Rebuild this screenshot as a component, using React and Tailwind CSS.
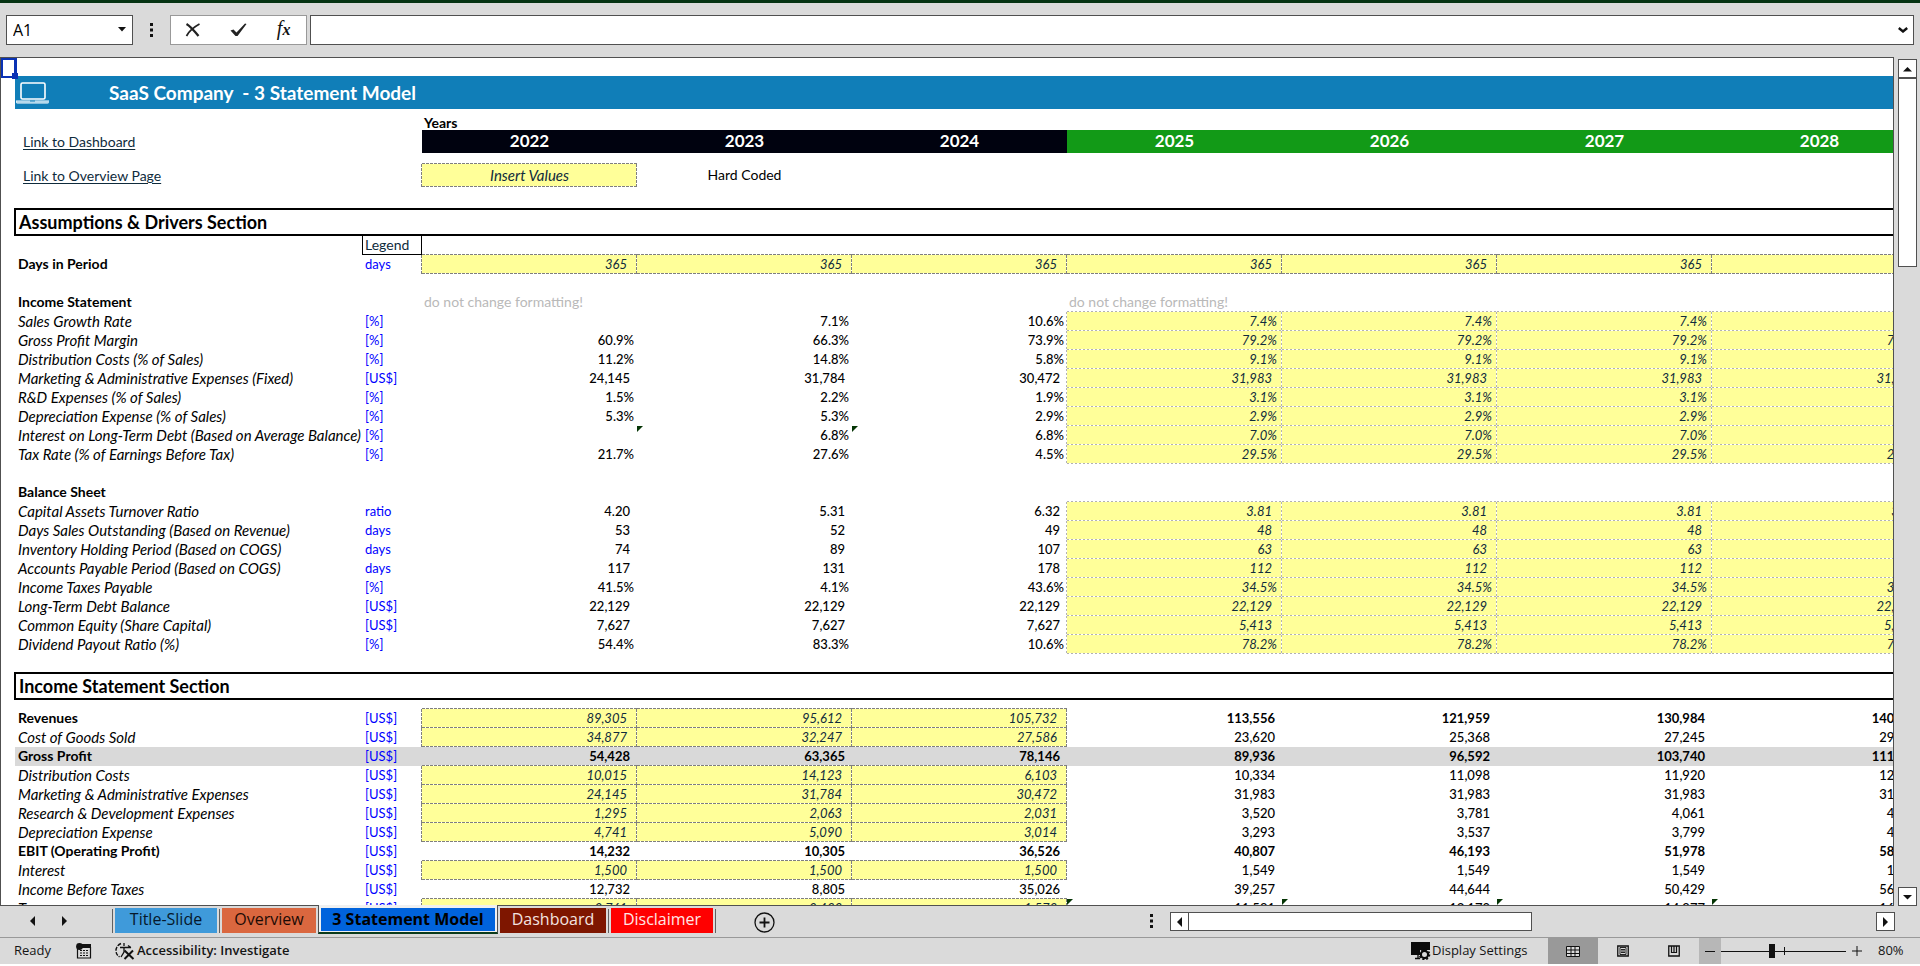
import React from "react";

const YEARS = ["2022", "2023", "2024", "2025", "2026", "2027", "2028"];

const LINES = {
  dark: {
    b: "bg-no-repeat [background-image:repeating-linear-gradient(90deg,#7f7f7f_0_3px,#ffffff_3px_4px)] [background-size:100%_1px] [background-position:0_100%]",
    r: "bg-no-repeat [background-image:repeating-linear-gradient(180deg,#7f7f7f_0_3px,#ffffff_3px_4px)] [background-size:1px_100%] [background-position:100%_0]",
    br: "bg-no-repeat [background-image:repeating-linear-gradient(90deg,#7f7f7f_0_3px,#ffffff_3px_4px),repeating-linear-gradient(180deg,#7f7f7f_0_3px,#ffffff_3px_4px)] [background-size:100%_1px,1px_100%] [background-position:0_100%,100%_0]",
  },
  light: {
    b: "bg-no-repeat [background-image:repeating-linear-gradient(90deg,#b2b2b2_0_2px,#ffffff_2px_4px)] [background-size:100%_1px] [background-position:0_100%]",
    r: "bg-no-repeat [background-image:repeating-linear-gradient(180deg,#b2b2b2_0_2px,#ffffff_2px_4px)] [background-size:1px_100%] [background-position:100%_0]",
    br: "bg-no-repeat [background-image:repeating-linear-gradient(90deg,#b2b2b2_0_2px,#ffffff_2px_4px),repeating-linear-gradient(180deg,#b2b2b2_0_2px,#ffffff_2px_4px)] [background-size:100%_1px,1px_100%] [background-position:0_100%,100%_0]",
  },
};

const f = (a, b) => [...a, b, b, b, b];

const ASSUMPTIONS = [
  { label: "Sales Growth Rate", unit: "[%]", v: f(["", "7.1%", "10.6%"], "7.4%") },
  { label: "Gross Profit Margin", unit: "[%]", v: f(["60.9%", "66.3%", "73.9%"], "79.2%") },
  { label: "Distribution Costs (% of Sales)", unit: "[%]", v: f(["11.2%", "14.8%", "5.8%"], "9.1%") },
  { label: "Marketing & Administrative Expenses (Fixed)", unit: "[US$]", v: f(["24,145", "31,784", "30,472"], "31,983") },
  { label: "R&D Expenses (% of Sales)", unit: "[%]", v: f(["1.5%", "2.2%", "1.9%"], "3.1%") },
  { label: "Depreciation Expense (% of Sales)", unit: "[%]", v: f(["5.3%", "5.3%", "2.9%"], "2.9%") },
  { label: "Interest on Long-Term Debt (Based on Average Balance)", unit: "[%]", v: f(["", "6.8%", "6.8%"], "7.0%"), flags: [1, 2] },
  { label: "Tax Rate (% of Earnings Before Tax)", unit: "[%]", v: f(["21.7%", "27.6%", "4.5%"], "29.5%") },
];

const BALANCE = [
  { label: "Capital Assets Turnover Ratio", unit: "ratio", v: f(["4.20", "5.31", "6.32"], "3.81") },
  { label: "Days Sales Outstanding (Based on Revenue)", unit: "days", v: f(["53", "52", "49"], "48") },
  { label: "Inventory Holding Period (Based on COGS)", unit: "days", v: f(["74", "89", "107"], "63") },
  { label: "Accounts Payable Period (Based on COGS)", unit: "days", v: f(["117", "131", "178"], "112") },
  { label: "Income Taxes Payable", unit: "[%]", v: f(["41.5%", "4.1%", "43.6%"], "34.5%") },
  { label: "Long-Term Debt Balance", unit: "[US$]", v: f(["22,129", "22,129", "22,129"], "22,129") },
  { label: "Common Equity (Share Capital)", unit: "[US$]", v: f(["7,627", "7,627", "7,627"], "5,413") },
  { label: "Dividend Payout Ratio (%)", unit: "[%]", v: f(["54.4%", "83.3%", "10.6%"], "78.2%") },
];

const INCOME = [
  { label: "Revenues", bold: true, input: true, next: true, v: ["89,305", "95,612", "105,732", "113,556", "121,959", "130,984", "140,677"] },
  { label: "Cost of Goods Sold", input: true, next: true, v: ["34,877", "32,247", "27,586", "23,620", "25,368", "27,245", "29,261"] },
  { label: "Gross Profit", bold: true, shade: true, next: true, v: ["54,428", "63,365", "78,146", "89,936", "96,592", "103,740", "111,416"] },
  { label: "Distribution Costs", input: true, next: true, v: ["10,015", "14,123", "6,103", "10,334", "11,098", "11,920", "12,802"] },
  { label: "Marketing & Administrative Expenses", input: true, next: true, v: ["24,145", "31,784", "30,472", "31,983", "31,983", "31,983", "31,983"] },
  { label: "Research & Development Expenses", input: true, next: true, v: ["1,295", "2,063", "2,031", "3,520", "3,781", "4,061", "4,361"] },
  { label: "Depreciation Expense", input: true, next: true, v: ["4,741", "5,090", "3,014", "3,293", "3,537", "3,799", "4,080"] },
  { label: "EBIT (Operating Profit)", bold: true, next: true, v: ["14,232", "10,305", "36,526", "40,807", "46,193", "51,978", "58,190"] },
  { label: "Interest", input: true, next: true, v: ["1,500", "1,500", "1,500", "1,549", "1,549", "1,549", "1,549"] },
  { label: "Income Before Taxes", next: true, v: ["12,732", "8,805", "35,026", "39,257", "44,644", "50,429", "56,641"] },
  { label: "Taxes", input: true, next: true, flags: [3, 4, 5, 6], v: ["2,761", "2,433", "1,573", "11,581", "13,170", "14,877", "16,709"] },
];

function Flag() {
  return <span className="absolute top-0 left-0 h-1.5 w-1.5 bg-[#053505] [clip-path:polygon(0_0,100%_0,0_100%)]" />;
}

function YearCell({ text, fill, tone, sides, bold, flag }) {
  const pct = text.endsWith("%");
  const pad = fill ? (pct ? "pr-[5px]" : "pr-[10px]") : pct ? "pr-[3px]" : "pr-[7px]";
  return (
    <td
      className={`relative p-0 pb-0.5 text-right text-[13px] ${pad} ${fill ? "bg-[#ffff99] italic text-[#0f2b3c]" : "text-black"} ${bold ? "font-bold" : fill ? "font-normal" : "font-medium"} ${sides ? LINES[tone][sides] : ""}`}
    >
      {flag && <Flag />}
      {text}
    </td>
  );
}

function Row({ row, inputFrom, inputTo, tone }) {
  const unit = row.unit || "[US$]";
  return (
    <tr className={`h-[19px] ${row.shade ? "bg-[#d9d9d9]" : ""}`}>
      <td className="bg-white p-0" />
      <th scope="row" className={`p-0 pb-0.5 pl-[3px] text-left whitespace-nowrap text-black ${row.bold ? "text-sm leading-4 font-bold" : "text-[15px] leading-4 font-normal italic"}`}>
        {row.label}
      </th>
      <td className={`p-0 pb-0.5 pl-0.5 text-[13px] text-[#0000ff] ${row.left && tone ? LINES[tone].r : ""}`}>{unit}</td>
      {row.v.map((t, i) => {
        const inRange = i >= inputFrom && i <= inputTo;
        const fill = inRange && row.input !== false;
        const edge = i === inputFrom - 1;
        const sides = fill ? "br" : inRange && row.next ? "b" : edge ? "r" : "";
        return (
          <YearCell
            key={i}
            text={t}
            fill={fill}
            tone={tone}
            sides={sides}
            bold={row.bold && !fill}
            flag={row.flags && row.flags.includes(i)}
          />
        );
      })}
    </tr>
  );
}

function Blank({ h, from, to, tone }) {
  return (
    <tr className={h}>
      <td className="p-0" />
      <td className="p-0" />
      <td className="p-0" />
      {YEARS.map((y, i) => (
        <td key={y} className={`p-0 ${tone && i >= from && i <= to ? LINES[tone].b : ""}`} />
      ))}
    </tr>
  );
}

function Section({ title }) {
  return (
    <tr className="h-7">
      <td className="border-r border-black p-0" />
      <th colSpan={9} scope="colgroup" className="border-y-2 border-l border-black p-0 pl-[3px] text-left text-lg leading-6 font-bold text-black">
        {title}
      </th>
    </tr>
  );
}

function Heading({ title, notes, tone }) {
  return (
    <tr className="h-[19px]">
      <td className="p-0" />
      <th scope="row" className="p-0 pb-0.5 pl-[3px] text-left text-sm leading-4 font-bold text-black">{title}</th>
      <td className="p-0" />
      {YEARS.map((y, i) => (
        <td key={y} className={`p-0 pb-0.5 pl-0.5 text-sm leading-4 text-[#b9b9b9] ${i > 2 ? LINES[tone].b : ""}`}>
          {notes && (i === 0 || i === 3) ? "do not change formatting!" : ""}
        </td>
      ))}
    </tr>
  );
}

function Laptop() {
  return (
    <svg className="ml-px block" width="34" height="22" viewBox="0 0 34 22" fill="none" aria-hidden="true">
      <rect x="5" y="1" width="24" height="16" rx="1.5" stroke="#fff" strokeWidth="1.6" />
      <path d="M0 18.5h33v2a1.5 1.5 0 0 1-1.500 1h-30A1.500 1.500 0 0 1 0 20.500z" fill="#fff" />
      <path d="M0.500 20h32.500" stroke="#6fb4da" strokeWidth="1" />
      <path d="M14 18.500h5v1h-5z" fill="#107eb8" />
    </svg>
  );
}

function Sheet() {
  return (
    <table className="w-[1926px] table-fixed border-separate border-spacing-0 leading-4">
      <colgroup>
        <col className="w-3.5" />
        <col className="w-[348px]" />
        <col className="w-[59px]" />
        {YEARS.map((y) => (
          <col key={y} className="w-[215px]" />
        ))}
      </colgroup>
      <tbody>
        <tr className="h-[18px]">
          <td className="relative p-0">
            <span className="absolute top-0 left-0 h-5 w-4 border-2 border-r-3 border-[#0a32b4]" />
            <span className="absolute top-[15px] left-[11px] h-1.5 w-1.5 bg-[#0a32b4]" />
          </td>
          <td colSpan={9} className="p-0" />
        </tr>
        <tr className="h-[33px]">
          <td className="p-0" />
          <th colSpan={9} className="bg-[#107eb8] p-0 text-left text-[19px] leading-6 font-bold text-white">
            <span className="flex items-center gap-[59px]">
              <Laptop />
              <span className="whitespace-pre">SaaS Company  - 3 Statement Model</span>
            </span>
          </th>
        </tr>
        <tr className="h-[21px]">
          <td className="p-0" />
          <td className="p-0" />
          <td className="p-0" />
          <th colSpan={7} className="p-0 pl-0.5 text-left align-bottom text-sm leading-[14px] font-bold text-black">Years</th>
        </tr>
        <tr className="h-[23px]">
          <td className="p-0" />
          <td className="p-0 pb-[3px] pl-2 align-bottom text-sm leading-4">
            <a href="#dashboard" className="text-[#0f2b3c] underline underline-offset-2">Link to Dashboard</a>
          </td>
          <td className="p-0" />
          {YEARS.map((y, i) => (
            <th key={y} scope="col" className={`p-0 pb-0.5 text-center text-[17px] leading-5 font-bold text-white ${i < 3 ? "bg-[#00020f]" : "bg-[#129a17]"}`}>{y}</th>
          ))}
        </tr>
        <Blank h="h-[11px]" from={0} to={0} tone="dark" />
        <tr className="h-[23px]">
          <td className="p-0" />
          <td className="p-0 pb-[3px] pl-2 align-bottom text-sm leading-4">
            <a href="#overview" className="text-[#0f2b3c] underline underline-offset-2">Link to Overview Page</a>
          </td>
          <td className={`p-0 ${LINES.dark.r}`} />
          <td className={`bg-[#ffff99] p-0 pb-0.5 text-center text-[15px] leading-4 text-[#0f2b3c] italic ${LINES.dark.br}`}>Insert Values</td>
          <td className="p-0 pb-0.5 text-center text-sm leading-4 text-black">Hard Coded</td>
          <td colSpan={5} className="p-0" />
        </tr>
        <Blank h="h-[21px]" />
        <Section title="Assumptions & Drivers Section" />
        <tr className="h-[19px]">
          <td className="p-0" />
          <td className="border-r border-black p-0" />
          <td className="border-r border-b border-black p-0 pl-0.5 text-sm leading-4 text-[#0f2b3c]">Legend</td>
          {YEARS.map((y) => (
            <td key={y} className={`p-0 ${LINES.dark.b}`} />
          ))}
        </tr>
        <Row row={{ label: "Days in Period", bold: true, unit: "days", left: true, v: YEARS.map(() => "365") }} inputFrom={0} inputTo={6} tone="dark" />
        <Blank h="h-[19px]" />
        <Heading title="Income Statement" notes tone="light" />
        {ASSUMPTIONS.map((r) => (
          <Row key={r.label} row={r} inputFrom={3} inputTo={6} tone="light" />
        ))}
        <Blank h="h-[19px]" />
        <Heading title="Balance Sheet" tone="light" />
        {BALANCE.map((r) => (
          <Row key={r.label} row={r} inputFrom={3} inputTo={6} tone="light" />
        ))}
        <Blank h="h-[18px]" />
        <Section title="Income Statement Section" />
        <Blank h="h-[9px]" from={0} to={2} tone="dark" />
        {INCOME.map((r) => (
          <Row key={r.label} row={{ ...r, input: !!r.input, left: !!r.input }} inputFrom={0} inputTo={2} tone="dark" />
        ))}
      </tbody>
    </table>
  );
}

function Dots() {
  return (
    <svg width="3" height="14" viewBox="0 0 3 14" fill="#111" aria-hidden="true">
      <path d="M0 0h3v3H0zM0 5.500h3v3H0zM0 11h3v3H0z" />
    </svg>
  );
}

function FormulaBar() {
  return (
    <div className="flex h-[54px] shrink-0 items-center bg-[#dadada] pr-1.5 pb-px pl-1.5">
      <div className="flex h-[30px] w-[127px] items-center border border-[#505050] bg-white">
        <input aria-label="Name box" defaultValue="A1" className="w-full min-w-0 flex-1 bg-transparent pl-1.5 text-base text-black outline-none" />
        <button aria-label="Open name list" className="flex h-full w-[14px] items-center">
          <svg width="8" height="5" viewBox="0 0 8 5" aria-hidden="true"><path d="M0 0h8L4 4.500z" fill="#111" /></svg>
        </button>
      </div>
      <div className="flex w-[37px] justify-center"><Dots /></div>
      <div className="flex h-[30px] w-[137px] items-center justify-around border border-[#999] bg-white">
        <button aria-label="Cancel">
          <svg width="16" height="14" viewBox="0 0 16 14" fill="none" stroke="#222" aria-hidden="true">
            <path d="M1.500 1C5 3 9 7.500 13.500 13" strokeWidth="2.200" />
            <path d="M14.500 1C9 4 4 8 1.500 13" strokeWidth="1.700" />
          </svg>
        </button>
        <button aria-label="Enter">
          <svg width="17" height="14" viewBox="0 0 17 14" aria-hidden="true">
            <path d="M0.500 7.500l3-1 3 3L15 0.500l1.500 0.500L7.500 13h-2z" fill="#222" />
          </svg>
        </button>
        <button aria-label="Insert function" className="w-4 font-['Liberation_Serif',serif] text-xl leading-5 text-[#111] italic">
          f<span className="text-base font-bold">x</span>
        </button>
      </div>
      <div className="ml-[3px] flex h-[30px] flex-1 items-center border border-[#505050] bg-white">
        <input aria-label="Formula" className="min-w-0 flex-1 bg-transparent px-2 text-base outline-none" />
        <button aria-label="Expand formula bar" className="flex h-full w-[15px] items-center">
          <svg width="10" height="6" viewBox="0 0 10 6" fill="none" stroke="#111" strokeWidth="2.400" aria-hidden="true"><path d="M0.800 1L5 4.500 9.200 1" /></svg>
        </button>
      </div>
    </div>
  );
}

const ARROWS = {
  up: "M0 5.500h9L4.500 1z",
  down: "M0 1h9L4.500 5.500z",
};

function Arrow({ d, w = 9, h = 6 }) {
  return (
    <svg width={w} height={h} viewBox={`0 0 ${w} ${h}`} fill="#111" aria-hidden="true"><path d={d} /></svg>
  );
}

function VScroll() {
  const b = "flex w-[19px] shrink-0 items-center justify-center border border-[#505050] bg-white";
  return (
    <div className="flex w-[26px] shrink-0 flex-col bg-[#dadada] pt-0.5 pl-1">
      <button aria-label="Scroll up" className={`${b} h-[19px]`}><Arrow d={ARROWS.up} /></button>
      <div className={`${b} h-[189px]`} />
      <div className="flex-1" />
      <button aria-label="Scroll down" className={`${b} h-[19px]`}><Arrow d={ARROWS.down} /></button>
    </div>
  );
}

function Separator({ className }) {
  return <span className={`mt-[3px] h-6 w-px bg-[#606060] ${className}`} />;
}

function Tab({ label, className }) {
  return <button className={`mt-0.5 h-[25px] pb-1 text-base leading-5 ${className}`}>{label}</button>;
}

function TabBar() {
  const b = "flex h-[19px] items-center justify-center border border-[#505050] bg-white";
  return (
    <div className="flex h-[31px] shrink-0 items-start bg-[#dadada]">
      <div className="flex w-[112px] items-center gap-[27px] pt-2.5 pl-[30px]">
        <button aria-label="Previous sheet"><Arrow w={5} h={10} d="M5 0v10L0 5z" /></button>
        <button aria-label="Next sheet"><Arrow w={5} h={10} d="M0 0v10l5-5z" /></button>
      </div>
      <Separator className="mr-0.5" />
      <Tab label="Title-Slide" className="w-[102px] bg-[#3f9ada] text-[#06182b]" />
      <Separator className="mx-0.5" />
      <Tab label="Overview" className="w-[94px] bg-[#da673f] text-[#1d0b05]" />
      <div className="-mt-px ml-0.5 h-[29px] w-[180px] border-x border-b-2 border-x-[#505050] border-b-[#0a3a1a] bg-[#f0f0f0] px-0.5 pt-[3px]">
        <button aria-current="page" className="block h-[23px] w-full bg-[#0063dc] pb-0.5 text-base leading-5 font-bold text-black">3 Statement Model</button>
      </div>
      <Tab label="Dashboard" className="ml-0.5 w-[106px] bg-[#7e1600] text-[#f4e4e0]" />
      <Separator className="mx-0.5" />
      <Tab label="Disclaimer" className="w-[102px] bg-[#ff0000] text-[#ffe6e6]" />
      <Separator className="ml-0.5" />
      <button aria-label="New sheet" className="mt-1.5 ml-[38px]">
        <svg width="21" height="21" viewBox="0 0 21 21" fill="none" stroke="#111" aria-hidden="true">
          <circle cx="10.500" cy="10.500" r="9.500" strokeWidth="1.300" />
          <path d="M10.500 5.500v10M5.500 10.500h10" strokeWidth="1.800" />
        </svg>
      </button>
      <div className="flex-1" />
      <div className="mt-2 mr-[17px]"><Dots /></div>
      <div className="mt-1.5 mr-[25px] flex w-[725px] justify-between">
        <div className="flex">
          <button aria-label="Scroll left" className={`${b} w-[19px]`}><Arrow w={5} h={10} d="M5 0v10L0 5z" /></button>
          <div className={`${b} -ml-px w-[344px]`} />
        </div>
        <button aria-label="Scroll right" className={`${b} w-[19px]`}><Arrow w={5} h={10} d="M0 0v10l5-5z" /></button>
      </div>
    </div>
  );
}

function StatusBar() {
  return (
    <div className="flex h-[27px] shrink-0 items-center border-t border-[#999] bg-[#dadada] text-[13px] text-[#151515]">
      <span className="w-[76px] pl-3.5">Ready</span>
      <button aria-label="Record macro" className="w-[39px]">
        <svg width="16" height="16" viewBox="0 0 16 16" fill="none" aria-hidden="true">
          <path d="M1.500 4v11h13V4" stroke="#111" strokeWidth="1.200" />
          <path d="M6 1h9v4H6z" fill="#111" />
          <circle cx="3.500" cy="3.500" r="3.400" fill="#111" />
          <path d="M4 7.500h8.500M4 10h8.500M4 12.500h8.500" stroke="#111" strokeWidth="1" strokeDasharray="2 1" />
        </svg>
      </button>
      <button className="flex items-center gap-0.5 font-semibold">
        <svg width="20" height="18" viewBox="0 0 20 18" fill="none" stroke="#111" aria-hidden="true">
          <path d="M6 1.500C2.500 3 0.800 6 1 9s1.500 4.500 3.500 6" strokeWidth="1.400" strokeDasharray="4 1.200" />
          <path d="M9 1v3M5 5.500h11M9 6v4l-3 5M13 3.500l3 2" strokeWidth="1.300" />
          <path d="M9.500 8.500l9 8.500M18 8.500L9.500 17" strokeWidth="2" />
        </svg>
        Accessibility: Investigate
      </button>
      <div className="flex-1" />
      <button className="flex w-[137px] items-center gap-px whitespace-nowrap">
        <svg width="20" height="18" viewBox="0 0 20 18" aria-hidden="true">
          <path d="M0 0h19v8H9v5H0z" fill="#0a0a0a" />
          <path d="M4 16.500h5M7 13v4" stroke="#0a0a0a" strokeWidth="1.300" />
          <circle cx="13.500" cy="12.500" r="3.600" fill="#dadada" stroke="#0a0a0a" strokeWidth="2.200" />
          <circle cx="13.500" cy="12.500" r="5" fill="none" stroke="#0a0a0a" strokeWidth="1.600" strokeDasharray="2 1.900" />
        </svg>
        Display Settings
      </button>
      <button aria-label="Normal view" className="flex h-full w-[50px] items-center justify-center bg-[#999]">
        <svg width="14" height="13" viewBox="0 0 14 13" fill="#dadada" stroke="#111" aria-hidden="true">
          <path d="M0.500 1.500h13v10h-13zM0.500 5h13M0.500 8.500h13M5 1.500v10M9 1.500v10" />
        </svg>
      </button>
      <button aria-label="Page layout view" className="flex h-full w-[50px] items-center justify-center">
        <svg width="12" height="12" viewBox="0 0 12 12" fill="none" stroke="#111" aria-hidden="true">
          <path d="M0.750 1h10.500v10H0.750z" strokeWidth="1.300" />
          <path d="M3 2.500h6v7H3zM4 4.500h4M4 6h4M4 7.500h4" strokeWidth="0.900" />
        </svg>
      </button>
      <button aria-label="Page break preview" className="flex h-full w-[51px] items-center justify-center">
        <svg width="12" height="12" viewBox="0 0 12 12" fill="none" stroke="#111" aria-hidden="true">
          <path d="M0.750 1h10.500v10H0.750z" strokeWidth="1.300" />
          <path d="M3.500 1v6.500h5V1M6 1v6.500" strokeWidth="1.200" />
        </svg>
      </button>
      <button aria-label="Zoom out" className="flex h-full w-[22px] items-center justify-center bg-[#b7b7b7]">
        <span className="h-px w-2.5 bg-[#111]" />
      </button>
      <div className="relative flex h-full w-[125px] items-center">
        <input
          type="range"
          aria-label="Zoom"
          aria-valuetext="80%"
          min="0"
          max="100"
          defaultValue="40"
          className="h-4 w-full appearance-none bg-[linear-gradient(#111,#111)] bg-[length:100%_1px] bg-center bg-no-repeat [&::-webkit-slider-thumb]:h-3.5 [&::-webkit-slider-thumb]:w-1.5 [&::-webkit-slider-thumb]:appearance-none [&::-webkit-slider-thumb]:bg-[#111]"
        />
        <span className="absolute top-[9px] left-1/2 h-2 w-px bg-[#111]" />
      </div>
      <button aria-label="Zoom in" className="flex h-full w-[22px] items-center justify-center">
        <svg width="10" height="10" viewBox="0 0 10 10" stroke="#111" aria-hidden="true"><path d="M5 0v10M0 5h10" /></svg>
      </button>
      <span className="w-[52px] pl-2.5">80%</span>
    </div>
  );
}

export default function App() {
  return (
    <div className="flex h-screen flex-col overflow-hidden bg-white pb-0.5 font-['Open_Sans','Noto_Sans',sans-serif]">
      <div className="h-[3px] shrink-0 bg-[#053312]" />
      <FormulaBar />
      <div className="flex min-h-0 flex-1 bg-[#dadada]">
        <main className="min-w-0 flex-1 overflow-hidden border border-[#505050] bg-white font-['Lato','Open_Sans',sans-serif]">
          <Sheet />
        </main>
        <VScroll />
      </div>
      <TabBar />
      <StatusBar />
    </div>
  );
}
